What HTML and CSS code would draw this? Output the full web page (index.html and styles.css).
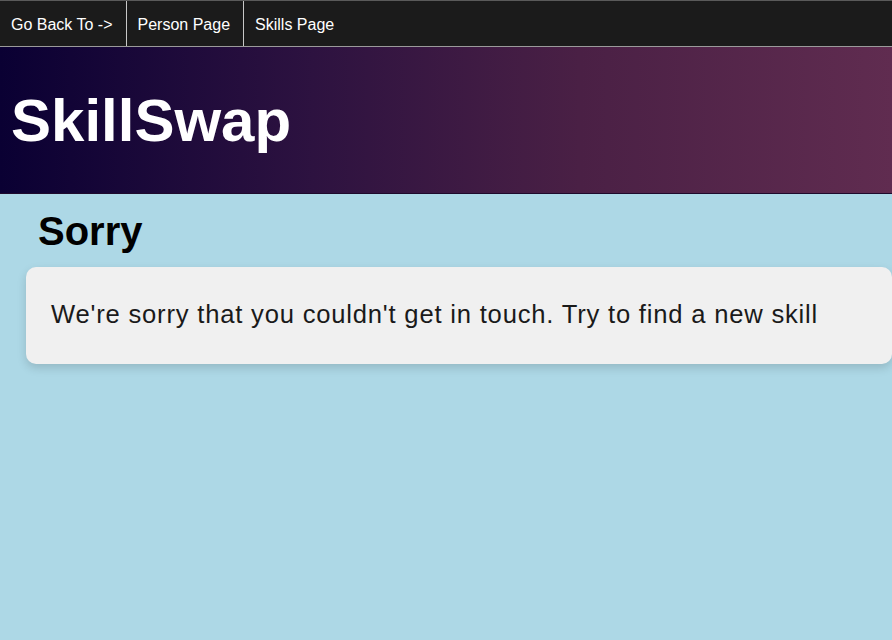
FILE: index.html
```html
<!DOCTYPE html>
<html lang="en">
<head>
<meta charset="utf-8">
<title>SkillSwap - Sorry</title>
<link rel="stylesheet" href="styles.css">
</head>
<body>
<nav class="topnav">
  <a class="navlink" href="#">Go Back To -&gt;</a>
  <a class="navlink" href="#">Person Page</a>
  <a class="navlink last" href="#">Skills Page</a>
</nav>
<header class="banner">
  <h1 class="brand">SkillSwap</h1>
</header>
<main class="content">
  <h2 class="title">Sorry</h2>
  <div class="card">
    <p class="message">We're sorry that you couldn't get in touch. Try to find a new skill</p>
  </div>
</main>
</body>
</html>
```
FILE: styles.css
```css
html, body {
  margin: 0;
  padding: 0;
}
body {
  background: #add8e6;
  font-family: Arial, "Liberation Sans", sans-serif;
  min-height: 640px;
  overflow: hidden;
}
.topnav {
  display: flex;
  background: #1b1b1b;
  border-top: 1px solid #5a5a5a;
  border-bottom: 1px solid #9a9a9a;
}
.navlink {
  color: #ffffff;
  text-decoration: none;
  font-size: 16px;
  line-height: 18px;
  padding: 15px 13px 12px 11px;
  border-right: 1px solid #c8c8c8;
}
.navlink.last {
  border-right: none;
}
.banner {
  background: linear-gradient(to right, #0a0033, #2d1240 35%, #4a2045 65%, #602c50);
  padding: 39px 11px 38px;
  border-bottom: 1px solid #1e0a2c;
}
.brand {
  margin: 0;
  color: #ffffff;
  font-size: 60px;
  font-weight: bold;
  line-height: 69px;
}
.content {
  padding: 14px 0 0 26px;
}
.title {
  margin: 0 0 13px 12px;
  font-size: 40px;
  line-height: 46px;
  font-weight: bold;
  color: #000;
}
.card {
  background: #f0f0f0;
  border-radius: 10px;
  padding: 32px 25px 35px;
  box-shadow: 0 4px 10px rgba(0, 0, 0, 0.15);
}
.message {
  margin: 0;
  font-size: 25.6px;
  line-height: 30px;
  letter-spacing: 0.8px;
  color: #1a1a1a;
}
```
